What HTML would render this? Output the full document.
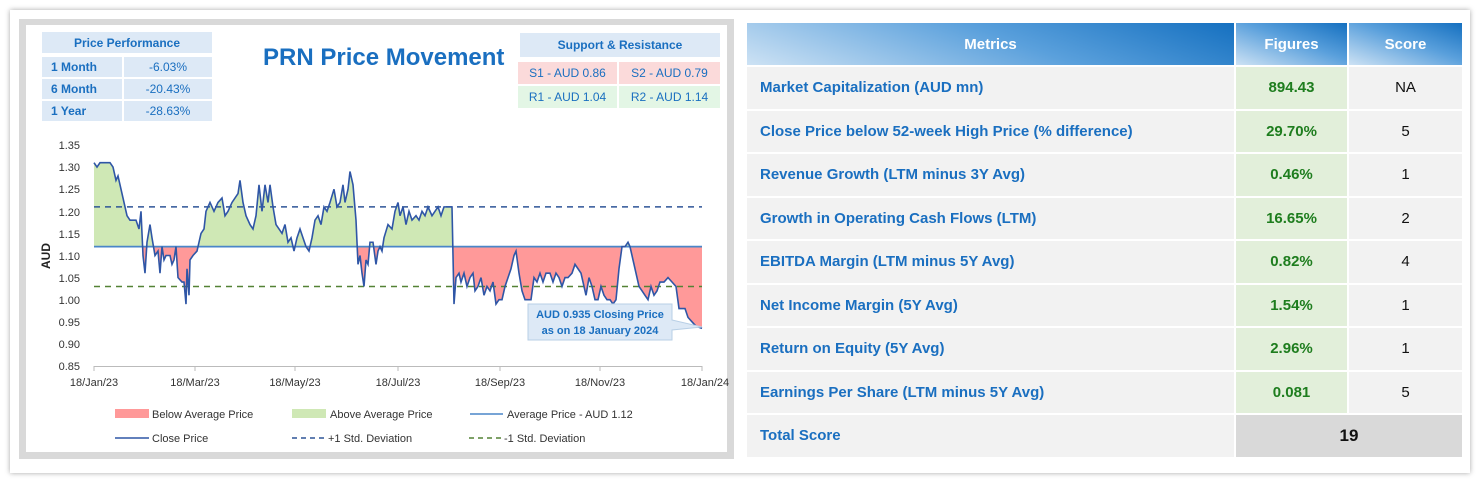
<!DOCTYPE html>
<html><head><meta charset="utf-8"><style>
*{margin:0;padding:0;box-sizing:border-box}
body{width:1480px;height:483px;background:#fff;font-family:"Liberation Sans",sans-serif;position:relative;overflow:hidden}
.card{position:absolute;left:10px;top:10px;width:1460px;height:463px;background:#fff;box-shadow:0 0 5px rgba(0,0,0,.35)}
.panel{position:absolute;left:19px;top:19px;width:715px;height:440px;border:7px solid #d9d9d9;border-top-width:6px;background:#fff}
.abs{position:absolute}
.c{display:flex;align-items:center;justify-content:center}
.pp{background:#dde9f6;color:#1a6fc0;font-size:12px}
.b{font-weight:bold}
table{position:absolute;left:745px;top:23px;border-collapse:collapse}
td{height:43.5px;border:2px solid #fff;font-size:15px}
.m{width:489px;background:#f2f2f2;color:#1a6fc0;font-weight:bold;padding-left:13px}
.f{width:113px;background:#e2efda;color:#1e7d1e;font-weight:bold;text-align:center}
.s{width:115px;background:#f2f2f2;color:#111;text-align:center}
th{height:43px;border:2px solid #fff;border-top:0;color:#fff;font-size:15px;font-weight:bold;background:linear-gradient(200deg,#1570c0 0%,#5aa0dc 45%,#cde2f4 100%)}
</style></head><body>
<div class="card"></div>
<div class="panel"></div>
<div class="abs pp c b" style="left:42px;top:32px;width:170px;height:21px">Price Performance</div>
<div class="abs pp b" style="left:42px;top:57px;width:80px;height:20px;line-height:20px;padding-left:9px">1 Month</div>
<div class="abs pp c" style="left:124px;top:57px;width:88px;height:20px">-6.03%</div>
<div class="abs pp b" style="left:42px;top:79px;width:80px;height:20px;line-height:20px;padding-left:9px">6 Month</div>
<div class="abs pp c" style="left:124px;top:79px;width:88px;height:20px">-20.43%</div>
<div class="abs pp b" style="left:42px;top:101px;width:80px;height:20px;line-height:20px;padding-left:9px">1 Year</div>
<div class="abs pp c" style="left:124px;top:101px;width:88px;height:20px">-28.63%</div>
<div class="abs b" style="left:263px;top:44px;font-size:24px;color:#1a6fc0">PRN Price Movement</div>
<div class="abs pp c b" style="left:520px;top:33px;width:200px;height:24px">Support &amp; Resistance</div>
<div class="abs c" style="left:518px;top:62px;width:99px;height:22px;background:#fbdada;color:#1a6fc0;font-size:12px">S1 - AUD 0.86</div>
<div class="abs c" style="left:619px;top:62px;width:101px;height:22px;background:#fbdada;color:#1a6fc0;font-size:12px">S2 - AUD 0.79</div>
<div class="abs c" style="left:518px;top:86px;width:99px;height:22px;background:#e3f6e5;color:#1a6fc0;font-size:12px">R1 - AUD 1.04</div>
<div class="abs c" style="left:619px;top:86px;width:101px;height:22px;background:#e3f6e5;color:#1a6fc0;font-size:12px">R2 - AUD 1.14</div>

<svg class="abs" style="left:0;top:0" width="740" height="483" font-family="Liberation Sans" font-size="11" fill="#333">
<defs>
<clipPath id="ab" clipPathUnits="userSpaceOnUse"><rect x="90" y="112" width="620" height="30"/></clipPath>
<clipPath id="be" clipPathUnits="userSpaceOnUse"><rect x="90" y="80" width="620" height="32"/></clipPath>
<polygon id="pg" points="94,112 94,131 97,130 100,131 110,131 113,130 116,127 118,128 121,125 124,122 127,119 130,118 136,118 139,116 141,120 143,110 145,106 147,113 150,117 152,114 155,110 158,111 160,106 162,112 164,109 166,110 170,110 172,108 174,109 176,112 178,105 182,104 184,104 186,99 187,107 189,101 190,109 193,110 197,111 199,113 201,115 204,116 206,120 210,122 214,120 218,122 222,123 225,119 228,120 232,122 238,124 240,127 243,122 246,119 250,117 253,116 256,119 259,126 262,120 265,126 268,122 270,126 273,121 276,117 279,116 282,115 285,117 288,113 291,114 294,111 297,114 300,116 303,114 306,112 309,111 312,114 315,118 318,119 321,117 324,121 327,120 330,122 334,125 337,121 340,122 343,126 345,122 348,125 350,129 353,126 356,118 358,108 360,110 362,106 364,103 366,109 368,108 370,113 373,113 376,108 378,111 380,112 382,111 384,114 388,117 392,116 395,120 398,122 400,119 403,121 406,117 409,120 412,118 416,119 419,118 422,120 425,119 428,121 432,119 435,120 438,121 441,119 444,121 449,121 452,121 454,99 456,105 459,106 461,104 464,106 467,103 470,105 473,106 475,102 478,103 481,105 484,101 487,103 490,102 493,104 496,99 499,100 502,100 505,103 508,105 511,107 514,110 516,111 519,106 522,102 525,100 528,100 531,100 534,105 537,104 540,106 543,104 546,106 550,106 553,104 556,106 559,105 562,103 565,105 568,105 572,106 575,108 578,107 581,106 584,103 586,101 589,105 592,103 595,100 598,100 601,103 604,101 607,100 610,100 613,99 616,100 619,107 622,112 625,112 628,113 630,112 633,109 636,106 639,103 642,102 645,101 648,100 651,103 654,101 657,102 660,104 664,104 668,105 672,104 676,103 679,98 682,98 685,98 688,96 692,95 696,94 702,93.5 702,112"/>
</defs>
<g text-anchor="end">
<text x="80" y="149">1.35</text><text x="80" y="171">1.30</text><text x="80" y="193">1.25</text><text x="80" y="216">1.20</text><text x="80" y="238">1.15</text><text x="80" y="260">1.10</text><text x="80" y="282">1.05</text><text x="80" y="304">1.00</text><text x="80" y="326">0.95</text><text x="80" y="348">0.90</text><text x="80" y="370">0.85</text>
</g>
<text x="50" y="256" font-weight="bold" font-size="12" fill="#222" transform="rotate(-90 50 256)" text-anchor="middle">AUD</text>
<line x1="94" y1="366.5" x2="702" y2="366.5" stroke="#bbb"/>
<g stroke="#bbb"><line x1="94" y1="366" x2="94" y2="371"/><line x1="195" y1="366" x2="195" y2="371"/><line x1="295" y1="366" x2="295" y2="371"/><line x1="398" y1="366" x2="398" y2="371"/><line x1="500" y1="366" x2="500" y2="371"/><line x1="600" y1="366" x2="600" y2="371"/><line x1="702" y1="366" x2="702" y2="371"/></g>
<g text-anchor="middle"><text x="94" y="386">18/Jan/23</text><text x="195" y="386">18/Mar/23</text><text x="295" y="386">18/May/23</text><text x="398" y="386">18/Jul/23</text><text x="500" y="386">18/Sep/23</text><text x="600" y="386">18/Nov/23</text><text x="705" y="386">18/Jan/24</text></g>
<g transform="matrix(1 0 0 -4.42 0 741.7)">
<g clip-path="url(#ab)"><use href="#pg" fill="#cfe8b5"/></g>
<g clip-path="url(#be)"><use href="#pg" fill="#ff9999"/></g>
<line x1="94" y1="112" x2="702" y2="112" stroke="#4a86c8" stroke-width="1.8" vector-effect="non-scaling-stroke"/>
<line x1="94" y1="121" x2="702" y2="121" stroke="#2f5597" stroke-width="1.5" stroke-dasharray="6 5" vector-effect="non-scaling-stroke"/>
<line x1="94" y1="103" x2="702" y2="103" stroke="#548235" stroke-width="1.5" stroke-dasharray="6 5" vector-effect="non-scaling-stroke"/>
<polyline fill="none" stroke="#2f56a6" stroke-width="1.6" vector-effect="non-scaling-stroke" points="94,131 97,130 100,131 110,131 113,130 116,127 118,128 121,125 124,122 127,119 130,118 136,118 139,116 141,120 143,110 145,106 147,113 150,117 152,114 155,110 158,111 160,106 162,112 164,109 166,110 170,110 172,108 174,109 176,112 178,105 182,104 184,104 186,99 187,107 189,101 190,109 193,110 197,111 199,113 201,115 204,116 206,120 210,122 214,120 218,122 222,123 225,119 228,120 232,122 238,124 240,127 243,122 246,119 250,117 253,116 256,119 259,126 262,120 265,126 268,122 270,126 273,121 276,117 279,116 282,115 285,117 288,113 291,114 294,111 297,114 300,116 303,114 306,112 309,111 312,114 315,118 318,119 321,117 324,121 327,120 330,122 334,125 337,121 340,122 343,126 345,122 348,125 350,129 353,126 356,118 358,108 360,110 362,106 364,103 366,109 368,108 370,113 373,113 376,108 378,111 380,112 382,111 384,114 388,117 392,116 395,120 398,122 400,119 403,121 406,117 409,120 412,118 416,119 419,118 422,120 425,119 428,121 432,119 435,120 438,121 441,119 444,121 449,121 452,121 454,99 456,105 459,106 461,104 464,106 467,103 470,105 473,106 475,102 478,103 481,105 484,101 487,103 490,102 493,104 496,99 499,100 502,100 505,103 508,105 511,107 514,110 516,111 519,106 522,102 525,100 528,100 531,100 534,105 537,104 540,106 543,104 546,106 550,106 553,104 556,106 559,105 562,103 565,105 568,105 572,106 575,108 578,107 581,106 584,103 586,101 589,105 592,103 595,100 598,100 601,103 604,101 607,100 610,100 613,99 616,100 619,107 622,112 625,112 628,113 630,112 633,109 636,106 639,103 642,102 645,101 648,100 651,103 654,101 657,102 660,104 664,104 668,105 672,104 676,103 679,98 682,98 685,98 688,96 692,95 696,94 702,93.5"/>
</g>
<path d="M528,304 H672 V320 L702,327 L672,330 V340 H528 Z" fill="#dde9f6" stroke="#b8cfe6"/>
<text x="600" y="318" text-anchor="middle" font-weight="bold" font-size="11" fill="#1a6fc0">AUD 0.935 Closing Price</text>
<text x="600" y="334" text-anchor="middle" font-weight="bold" font-size="11" fill="#1a6fc0">as on 18 January 2024</text>
<rect x="115" y="409" width="34" height="9" fill="#ff9999"/><text x="152" y="418">Below Average Price</text>
<rect x="292" y="409" width="34" height="9" fill="#cfe8b5"/><text x="330" y="418">Above Average Price</text>
<line x1="470" y1="414" x2="503" y2="414" stroke="#4a86c8" stroke-width="1.5"/><text x="507" y="418">Average Price - AUD 1.12</text>
<line x1="115" y1="438" x2="149" y2="438" stroke="#2f56a6" stroke-width="1.5"/><text x="152" y="442">Close Price</text>
<line x1="292" y1="438" x2="327" y2="438" stroke="#2f5597" stroke-width="1.5" stroke-dasharray="5 4"/><text x="328" y="442">+1 Std. Deviation</text>
<line x1="469" y1="438" x2="503" y2="438" stroke="#548235" stroke-width="1.5" stroke-dasharray="5 4"/><text x="504" y="442">-1 Std. Deviation</text>
</svg>

<table>
<tr><th style="width:489px">Metrics</th><th style="width:113px">Figures</th><th style="width:115px">Score</th></tr>
<tr><td class="m">Market Capitalization (AUD mn)</td><td class="f">894.43</td><td class="s">NA</td></tr>
<tr><td class="m">Close Price below 52-week High Price (% difference)</td><td class="f">29.70%</td><td class="s">5</td></tr>
<tr><td class="m">Revenue Growth (LTM minus 3Y Avg)</td><td class="f">0.46%</td><td class="s">1</td></tr>
<tr><td class="m">Growth in Operating Cash Flows (LTM)</td><td class="f">16.65%</td><td class="s">2</td></tr>
<tr><td class="m">EBITDA Margin (LTM minus 5Y Avg)</td><td class="f">0.82%</td><td class="s">4</td></tr>
<tr><td class="m">Net Income Margin (5Y Avg)</td><td class="f">1.54%</td><td class="s">1</td></tr>
<tr><td class="m">Return on Equity (5Y Avg)</td><td class="f">2.96%</td><td class="s">1</td></tr>
<tr><td class="m">Earnings Per Share (LTM minus 5Y Avg)</td><td class="f">0.081</td><td class="s">5</td></tr>
<tr><td class="m">Total Score</td><td colspan="2" style="background:#d9d9d9;text-align:center;font-weight:bold;font-size:17px;color:#111">19</td></tr>
</table>
</body></html>
